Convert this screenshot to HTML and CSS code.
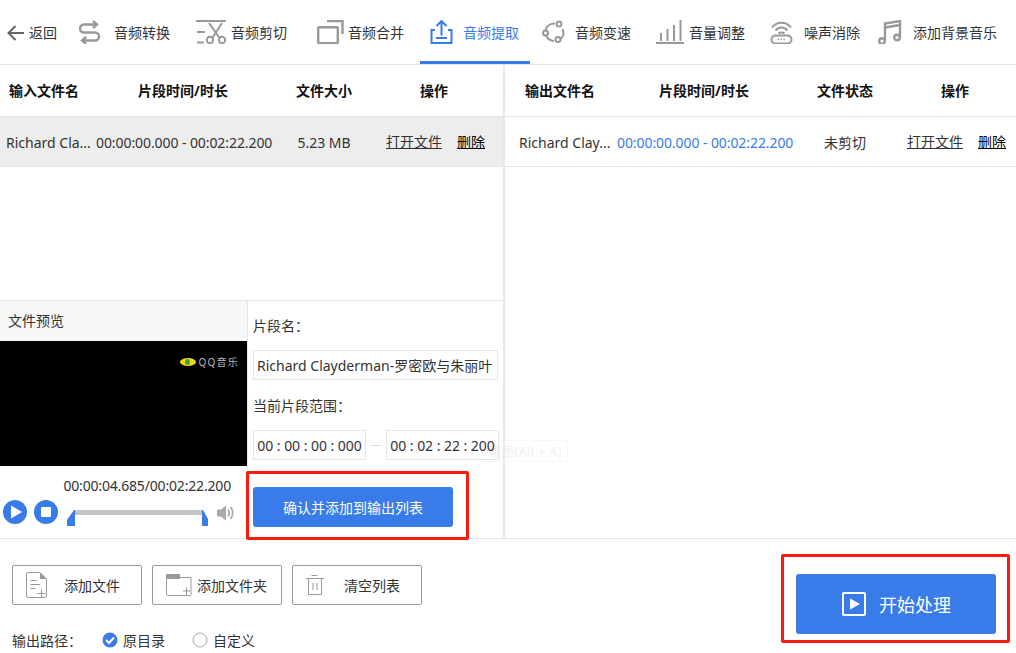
FILE: index.html
```html
<!DOCTYPE html>
<html lang="zh-CN">
<head>
    <meta charset="UTF-8">
    <meta name="viewport" content="width=device-width, initial-scale=1.0">
    <title>音频提取</title>
    <link rel="stylesheet" href="styles.css">
</head>
<body>
<div class="toolbar">
    <div class="tool">
        <svg class="icon-back" width="22" height="24" viewBox="0 0 22 24"><path d="M17 13H1.500M8.500 6L1.500 13L8.500 20"/></svg>
        <span>返回</span>
    </div>
    <div class="tool">
        <svg class="icon-heavy" width="35" height="24" viewBox="0 0 35 24"><path d="M14 1l4 3.500L14 8M18 4.500H5a4 4 0 0 0 0 8H16a4 4 0 0 1 0 8H3M7 17l-4 3.500L7 24"/></svg>
        <span>音频转换</span>
    </div>
    <div class="tool">
        <svg width="35" height="24" viewBox="0 0 35 24"><path d="M0 1H30M1 12H9M1 22.500H8M13 3L24 18.500M26 3L16 18.500"/><circle cx="14" cy="20" r="3.200"/><circle cx="26" cy="20" r="3.200"/></svg>
        <span>音频剪切</span>
    </div>
    <div class="tool">
        <svg width="31" height="24" viewBox="0 0 31 24"><rect class="thick" x="1.200" y="7.200" width="19.600" height="16" rx="1"/><path class="thick" d="M10 1H25.500V14"/></svg>
        <span>音频合并</span>
    </div>
    <div class="tool tool-active">
        <svg width="33" height="24" viewBox="0 0 33 24"><path d="M5 10H1.500V23H21.500V10H18M11.500 1.500V15.500M6.500 6L11.500 1L16.500 6M6 18H17"/></svg>
        <span>音频提取</span>
    </div>
    <div class="tool">
        <svg width="33" height="24" viewBox="0 0 33 24"><path d="M13 3.500A9.500 9.500 0 0 0 3.500 10M4 15.500A9.500 9.500 0 0 0 12 21M18.500 19.500A9.500 9.500 0 0 0 20.500 9"/><circle cx="17" cy="4" r="2.500"/><circle cx="3.500" cy="13" r="2.500"/><circle cx="16" cy="19.500" r="2.500"/></svg>
        <span>音频变速</span>
    </div>
    <div class="tool">
        <svg width="33" height="24" viewBox="0 0 33 24"><path d="M0 23H28M5 21V13M11.500 21V9M18 21V5M24.500 21V0"/></svg>
        <span>音量调整</span>
    </div>
    <div class="tool">
        <svg width="34" height="24" viewBox="0 0 34 24"><path d="M2 7.500C7 1 16 1 21 7.500M5.500 10.500C9 6.500 14 6.500 17.500 10.500M8.500 13.500C10 12 13 12 14.500 13.500"/><rect x="1.500" y="15.500" width="20" height="8" rx="4"/><path class="dots" d="M7.500 19.500H16"/></svg>
        <span>噪声消除</span>
    </div>
    <div class="tool">
        <svg width="35" height="24" viewBox="0 0 35 24"><path class="thick" d="M7 20V3.500L22 1V17M7 7.500L22 5"/><circle class="thick" cx="4" cy="21" r="2.800"/><circle class="thick" cx="19" cy="17.500" r="2.800"/></svg>
        <span>添加背景音乐</span>
    </div>
</div>

<div class="main">
    <div class="pane pane-input">
        <div class="list-head list-cols">
            <div class="col-name">输入文件名</div>
            <div class="head-time">片段时间/时长</div>
            <div>文件大小</div>
            <div class="head-ops">操作</div>
        </div>
        <div class="list-row list-cols row-selected">
            <div class="col-name">Richard Cla...</div>
            <div class="time-text">00:00:00.000 - 00:02:22.200</div>
            <div>5.23 MB</div>
            <div class="ops"><a>打开文件</a><a class="del">删除</a></div>
        </div>

        <div class="preview">
            <div class="preview-left">
                <div class="preview-title">文件预览</div>
                <div class="video">
                    <span class="qq-logo"><i></i></span>
                    <span class="qq-text">QQ音乐</span>
                </div>
                <div class="player">
                    <div class="player-time">00:00:04.685/00:02:22.200</div>
                    <div class="player-row">
                        <svg class="round-btn" width="24" height="24" viewBox="0 0 24 24"><circle class="blue" cx="12" cy="12" r="12"/><path class="white" d="M8 5.500L19 12L8 18.500Z"/></svg>
                        <svg class="round-btn" width="24" height="24" viewBox="0 0 24 24"><circle class="blue" cx="12" cy="12" r="12"/><rect class="white" x="7" y="7" width="10" height="10" rx="1"/></svg>
                        <svg class="slider" width="141" height="16" viewBox="0 0 141 16"><rect class="track" x="7" y="0" width="129" height="5"/><path class="blue" d="M7 0H8V16H0V10Z"/><path class="blue" d="M135 0H136L141 9V16H135Z"/></svg>
                        <svg class="speaker" width="18" height="16" viewBox="0 0 18 16"><path class="spk-fill" d="M0 4.500H4L9 0.500V15.500L4 11.500H0Z"/><path class="spk-line" d="M11 4.500C12.500 6.500 12.500 9.500 11 11.500M13.500 2C16.500 5.500 16.500 10.500 13.500 14"/></svg>
                    </div>
                </div>
            </div>
            <div class="preview-form">
                <div class="form-label">片段名：</div>
                <div class="text-box name-box">Richard Clayderman-罗密欧与朱丽叶</div>
                <div class="form-label">当前片段范围：</div>
                <div class="range">
                    <div class="text-box time-box">00 : 00 : 00 : 000</div>
                    <div class="range-dash"></div>
                    <div class="text-box time-box">00 : 02 : 22 : 200</div>
                </div>
                <button class="btn-confirm">确认并添加到输出列表</button>
            </div>
        </div>
    </div>

    <div class="pane pane-output">
        <div class="list-head list-cols">
            <div class="col-name">输出文件名</div>
            <div class="head-time">片段时间/时长</div>
            <div>文件状态</div>
            <div class="head-ops">操作</div>
        </div>
        <div class="list-row list-cols">
            <div class="col-name">Richard Clay...</div>
            <div class="time-text time-blue">00:00:00.000 - 00:02:22.200</div>
            <div>未剪切</div>
            <div class="ops"><a>打开文件</a><a class="del">删除</a></div>
        </div>
    </div>
</div>

<div class="footer">
    <div class="footer-left">
        <div class="file-btns">
            <button class="file-btn">
                <svg class="file-icon" width="21" height="26" viewBox="0 0 21 26"><path d="M14 0.500H2a1.500 1.500 0 0 0-1.500 1.500V24a1.500 1.500 0 0 0 1.500 1.500H19a1.500 1.500 0 0 0 1.500-1.500V7Z"/><path class="solid" d="M14 0.500L20.500 7H14Z"/><path d="M4.500 8.500H11M4.500 12.500H14M4.500 16.500H9.500M11.500 21.500H19.500M15.500 17.500V25"/></svg>
                <span class="label-file">添加文件</span>
            </button>
            <button class="file-btn">
                <svg class="file-icon" width="26" height="22" viewBox="0 0 26 22"><path d="M0.500 3.500H25V20.500a1 1 0 0 1-1 1H1.500a1 1 0 0 1-1-1Z"/><rect class="solid" x="0" y="0" width="14" height="5"/><path d="M17 17H24M20.500 13.500V21"/></svg>
                <span class="label-folder">添加文件夹</span>
            </button>
            <button class="file-btn">
                <svg class="file-icon" width="18" height="20" viewBox="0 0 18 20"><path d="M0 3.500H18M5.500 0.500H11.500M2.500 3.500V19.500H15.500V3.500M7 8V15M11 8V15"/></svg>
                <span class="label-clear">清空列表</span>
            </button>
        </div>
        <div class="out-path">
            <span class="out-label">输出路径：</span>
            <span class="radio-item">
                <svg width="16" height="16" viewBox="0 0 16 16"><circle class="blue" cx="8" cy="8" r="7.500"/><path class="tick" d="M4 8L7 11L12 5.500"/></svg>
                原目录
            </span>
            <span class="radio-item">
                <svg width="16" height="16" viewBox="0 0 16 16"><circle class="radio-off" cx="8" cy="8" r="7"/></svg>
                自定义
            </span>
        </div>
    </div>
    <button class="btn-start">
        <svg width="24" height="24" viewBox="0 0 24 24"><rect class="start-frame" x="1" y="1" width="22" height="22" rx="1"/><path class="white" d="M8 6.500L18 12L8 17.500Z"/></svg>
        <span>开始处理</span>
    </button>
</div>

<div class="ghost-tip">截图(Alt + A)</div>
<div class="mark mark-confirm"></div>
<div class="mark mark-start"></div>
</body>
</html>
```

FILE: styles.css
```css
* {
    box-sizing: border-box;
}

body {
    position: relative;
    width: 1016px;
    height: 653px;
    margin: 0;
    overflow: hidden;
    background: #fff;
    color: #333;
    font-family: "Noto Sans", "Noto Sans CJK SC", sans-serif;
    font-size: 14px;
}

button {
    font-family: inherit;
    cursor: pointer;
}

svg {
    display: block;
    flex: none;
}

.blue {
    fill: #387be9;
}

.white {
    fill: #fff;
}

/* toolbar */
.toolbar {
    display: grid;
    grid-template-columns: 72px 117px 121px 113px 112px 114px 114px 108px 1fr;
    height: 65px;
    padding-left: 7px;
    border-bottom: 1px solid #e5e5e5;
}

.tool {
    display: flex;
    align-items: center;
    height: 64px;
    padding-top: 3px;
    border-bottom: 3px solid transparent;
    white-space: nowrap;
}

.tool svg {
    fill: none;
    stroke: #999;
    stroke-width: 2;
}

.tool svg .thick {
    stroke-width: 2.400;
}

.tool svg .dots {
    stroke-width: 1.600;
    stroke-dasharray: 1.500 1.500;
}

.tool svg.icon-heavy {
    stroke-width: 2.400;
}

.tool svg.icon-back {
    stroke: #666;
}

.tool-active {
    margin-left: -10px;
    margin-right: 12px;
    padding-left: 10px;
    border-bottom-color: #387be9;
    color: #387be9;
}

.tool-active svg {
    stroke: #387be9;
}

/* panes */
.main {
    display: flex;
    height: 474px;
    border-bottom: 1px solid #e5e5e5;
}

.pane {
    display: flex;
    flex-direction: column;
}

.pane-input {
    width: 505px;
    border-right: 2px solid #e8e8e8;
}

.pane-output {
    flex: 1;
}

.list-cols {
    display: grid;
    align-items: center;
    text-align: center;
    white-space: nowrap;
}

.pane-input .list-cols {
    grid-template-columns: 96px 176px 104px 119px 8px;
}

.pane-output .list-cols {
    grid-template-columns: 112px 176px 104px 119px;
}

.col-name {
    text-align: left;
}

.list-head {
    height: 52px;
    padding-bottom: 2px;
    border-bottom: 1px solid #e5e5e5;
    color: #111;
    font-weight: 700;
}

.head-time {
    padding-right: 2px;
}

.head-ops {
    padding-right: 3px;
}

.pane-input .list-head .col-name {
    padding-left: 9px;
}

.pane-output .list-head .col-name {
    padding-left: 20px;
}

.list-row {
    height: 50px;
    padding-top: 1px;
    border-bottom: 1px solid #e5e5e5;
}

.pane-input .list-row .col-name {
    padding-left: 6px;
}

.pane-output .list-row .col-name {
    padding-left: 14px;
}

.row-selected {
    background: #ededed;
}

.time-text {
    letter-spacing: -0.080px;
}

.time-blue {
    color: #387be9;
}

.ops {
    display: flex;
    justify-content: center;
    gap: 15px;
    margin-top: -2px;
}

.ops a {
    text-decoration: underline;
}

.ops .del {
    color: #000;
}

/* preview */
.preview {
    display: flex;
    height: 238px;
    margin-top: auto;
    border-top: 1px solid #e5e5e5;
}

.preview-left {
    width: 248px;
    border-right: 1px solid #e8e8e8;
}

.preview-title {
    height: 40px;
    padding-left: 8px;
    background: #f7f7f7;
    line-height: 40px;
}

.video {
    display: flex;
    justify-content: flex-end;
    align-items: center;
    gap: 3px;
    height: 125px;
    padding: 0 8px 84px 0;
    background: #000;
}

.qq-logo {
    display: flex;
    justify-content: center;
    align-items: center;
    width: 16px;
    height: 8px;
    border-radius: 50%;
    background: #f5d90a;
}

.qq-logo i {
    width: 5px;
    height: 6px;
    border-radius: 50%;
    background: #3fa34d;
}

.qq-text {
    color: #bbb;
    font-size: 10px;
    line-height: 10px;
    letter-spacing: 1.200px;
    white-space: nowrap;
}

.player {
    height: 72px;
    padding-top: 10px;
}

.player-time {
    padding-right: 16px;
    line-height: 20px;
    letter-spacing: -0.170px;
    text-align: right;
}

.player-row {
    display: flex;
    align-items: flex-start;
    margin-top: 4px;
    padding-left: 3px;
}

.round-btn {
    margin-right: 7px;
}

.round-btn + .slider {
    margin-left: 2px;
}

.slider {
    margin-top: 10px;
}

.track {
    fill: #c4c4c4;
}

.speaker {
    margin: 5px 0 0 9px;
}

.spk-fill {
    fill: #aaa;
}

.spk-line {
    fill: none;
    stroke: #aaa;
    stroke-width: 1.800;
}

.preview-form {
    flex: 1;
    padding-left: 5px;
}

.form-label {
    height: 49px;
    line-height: 49px;
}

.name-box + .form-label {
    height: 50px;
    padding-top: 1px;
    line-height: 50px;
}

.text-box {
    height: 30px;
    border: 1px solid #e5e5e5;
    line-height: 30px;
    white-space: nowrap;
    overflow: hidden;
}

.name-box {
    width: 245px;
    padding-left: 3px;
}

.range {
    display: flex;
    align-items: center;
}

.time-box {
    width: 113px;
    letter-spacing: -0.050px;
    text-align: center;
}

.range-dash {
    width: 10px;
    height: 1px;
    margin: 0 5px;
    background: #ddd;
}

.btn-confirm {
    display: block;
    width: 200px;
    height: 40px;
    margin-top: 27px;
    border: none;
    border-radius: 3px;
    background: #387be9;
    color: #fff;
    font-size: 14px;
}

/* footer */
.footer {
    display: flex;
    justify-content: space-between;
    height: 114px;
    padding: 26px 20px 0 12px;
}

.file-btns {
    display: flex;
    gap: 10px;
}

.file-btn {
    display: flex;
    align-items: center;
    width: 130px;
    height: 40px;
    padding: 0 0 0 13px;
    border: 1px solid #999;
    border-radius: 2px;
    background: #fff;
    color: #333;
    font-size: 14px;
}

.file-icon {
    fill: none;
    stroke: #999;
    stroke-width: 1;
}

.file-icon .solid {
    fill: #999;
    stroke: none;
}

.label-file {
    margin-left: 17px;
}

.label-folder {
    margin-left: 5px;
}

.label-clear {
    margin-left: 20px;
}

.out-path {
    display: flex;
    align-items: center;
    height: 20px;
    margin-top: 25px;
}

.out-label {
    width: 90px;
}

.radio-item {
    display: flex;
    align-items: center;
    gap: 5px;
    margin-right: 27px;
}

.tick {
    fill: none;
    stroke: #fff;
    stroke-width: 2;
}

.radio-off {
    fill: #fff;
    stroke: #aaa;
}

.btn-start {
    display: flex;
    justify-content: center;
    align-items: center;
    gap: 13px;
    width: 200px;
    height: 60px;
    margin-top: 9px;
    padding: 0 0 1px 1px;
    border: none;
    border-radius: 3px;
    background: #387be9;
    color: #fff;
    font-size: 18px;
}

.btn-start svg {
    margin-top: 1px;
}

.start-frame {
    fill: none;
    stroke: #fff;
    stroke-width: 2;
}

/* overlays on top of the window */
.ghost-tip {
    position: absolute;
    z-index: -1;
    left: 482px;
    top: 440px;
    width: 86px;
    height: 22px;
    border: 1px solid #f8f8f8;
    color: #f0f0f0;
    font-size: 13px;
    line-height: 20px;
    text-align: center;
    white-space: nowrap;
}

.mark {
    position: absolute;
    border: 3px solid #fb1a10;
    border-radius: 2px;
}

.mark-confirm {
    left: 246px;
    top: 471px;
    width: 223px;
    height: 69px;
}

.mark-start {
    left: 781px;
    top: 554px;
    width: 229px;
    height: 89px;
}
```
